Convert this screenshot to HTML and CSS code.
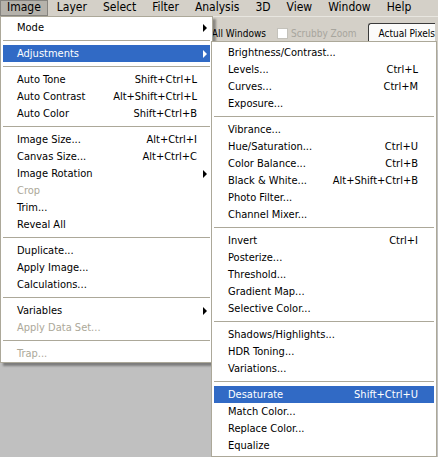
FILE: index.html
```html
<!DOCTYPE html>
<html>

<head>
    <meta charset="utf-8">
    <title>Image menu</title>
    <link rel="stylesheet" href="styles.css">
</head>

<body>
    <div class="menubar">
        <span class="active">Image</span>
        <span>Layer</span>
        <span>Select</span>
        <span>Filter</span>
        <span>Analysis</span>
        <span>3D</span>
        <span>View</span>
        <span>Window</span>
        <span>Help</span>
    </div>
    <div class="toolbar">
        <label class="opt"><span class="box"></span>Zoom All Windows</label>
        <label class="opt off"><span class="box"></span>Scrubby Zoom</label>
        <span class="btn">Actual Pixels</span>
    </div>

    <!-- Image menu -->
    <div class="menu main">
        <div class="item more">Mode</div>
        <div class="sep"></div>
        <div class="item more hl">Adjustments</div>
        <div class="sep"></div>
        <div class="item">Auto Tone<span class="key">Shift+Ctrl+L</span></div>
        <div class="item">Auto Contrast<span class="key">Alt+Shift+Ctrl+L</span></div>
        <div class="item">Auto Color<span class="key">Shift+Ctrl+B</span></div>
        <div class="sep"></div>
        <div class="item">Image Size...<span class="key">Alt+Ctrl+I</span></div>
        <div class="item">Canvas Size...<span class="key">Alt+Ctrl+C</span></div>
        <div class="item more">Image Rotation</div>
        <div class="item off">Crop</div>
        <div class="item">Trim...</div>
        <div class="item">Reveal All</div>
        <div class="sep"></div>
        <div class="item">Duplicate...</div>
        <div class="item">Apply Image...</div>
        <div class="item">Calculations...</div>
        <div class="sep"></div>
        <div class="item more">Variables</div>
        <div class="item off">Apply Data Set...</div>
        <div class="sep"></div>
        <div class="item off">Trap...</div>
    </div>

    <!-- Adjustments submenu -->
    <div class="menu sub">
        <div class="item">Brightness/Contrast...</div>
        <div class="item">Levels...<span class="key">Ctrl+L</span></div>
        <div class="item">Curves...<span class="key">Ctrl+M</span></div>
        <div class="item">Exposure...</div>
        <div class="sep"></div>
        <div class="item">Vibrance...</div>
        <div class="item">Hue/Saturation...<span class="key">Ctrl+U</span></div>
        <div class="item">Color Balance...<span class="key">Ctrl+B</span></div>
        <div class="item">Black &amp; White...<span class="key">Alt+Shift+Ctrl+B</span></div>
        <div class="item">Photo Filter...</div>
        <div class="item">Channel Mixer...</div>
        <div class="sep"></div>
        <div class="item">Invert<span class="key">Ctrl+I</span></div>
        <div class="item">Posterize...</div>
        <div class="item">Threshold...</div>
        <div class="item">Gradient Map...</div>
        <div class="item">Selective Color...</div>
        <div class="sep"></div>
        <div class="item">Shadows/Highlights...</div>
        <div class="item">HDR Toning...</div>
        <div class="item">Variations...</div>
        <div class="sep"></div>
        <div class="item hl">Desaturate<span class="key">Shift+Ctrl+U</span></div>
        <div class="item">Match Color...</div>
        <div class="item">Replace Color...</div>
        <div class="item">Equalize</div>
    </div>
</body>

</html>
```

FILE: styles.css
```css
* {
    box-sizing: border-box;
}

body {
    margin: 0;
    padding: 0;
    width: 438px;
    height: 457px;
    overflow: hidden;
    position: relative;
    background: #c0c0c0;
    font-family: "DejaVu Sans Condensed", "DejaVu Sans", sans-serif;
    font-stretch: condensed;
    font-size: 11px;
    color: #000;
}

.menubar {
    display: flex;
    height: 16px;
    background: #d4d0c8;
    font-size: 12px;
    line-height: 15px;
}

.menubar span {
    padding: 0 7px;
    margin-right: 2px;
}

.menubar .active {
    background: #b5b2ab;
    box-shadow: inset 0 0 0 1px #86847f;
}

.toolbar {
    display: flex;
    align-items: center;
    gap: 11px;
    height: 34px;
    padding-left: 169px;
    background: #d4d0c8;
    border-top: 1px solid #e8e6e0;
    font-size: 10px;
    white-space: nowrap;
    overflow: hidden;
}

.opt {
    display: flex;
    align-items: center;
}

.opt .box {
    width: 11px;
    height: 11px;
    margin-right: 3px;
    background: #fff;
    border: 1px solid #1c5180;
}

.opt.off {
    color: #a7a59d;
}

.opt.off .box {
    border-color: #c4c2bb;
}

.btn {
    flex: none;
    width: 67px;
    height: 21px;
    line-height: 19px;
    padding-left: 10px;
    background: #fbfbfa;
    border: 1px solid #3a3a3a;
    border-right: 0;
    border-radius: 3px 0 0 3px;
}

.menu {
    position: absolute;
    background: #fff;
    border: 1px solid #aca899;
    padding: 2px;
}

.main {
    left: 0;
    top: 16px;
    width: 213px;
    padding-bottom: 0;
    box-shadow: 3px 3px 2px rgba(0, 0, 0, 0.35);
}

.sub {
    left: 211px;
    top: 41px;
    width: 226px;
}

.item {
    display: flex;
    position: relative;
    height: 17px;
    line-height: 17px;
    padding: 0 13px 0 14px;
    white-space: nowrap;
}

.sub .item {
    padding-right: 16px;
}

.item .key {
    margin-left: auto;
}

.item.off {
    color: #aca899;
}

.item.hl {
    background: #316ac5;
    color: #fff;
}

.item.more:after {
    content: '';
    position: absolute;
    right: 3px;
    top: 5px;
    border-left: 4px solid #000;
    border-top: 4px solid transparent;
    border-bottom: 4px solid transparent;
}

.item.hl.more:after {
    border-left-color: #fff;
}

.sep {
    height: 1px;
    margin: 4px 0;
    background: #aca899;
}
```
